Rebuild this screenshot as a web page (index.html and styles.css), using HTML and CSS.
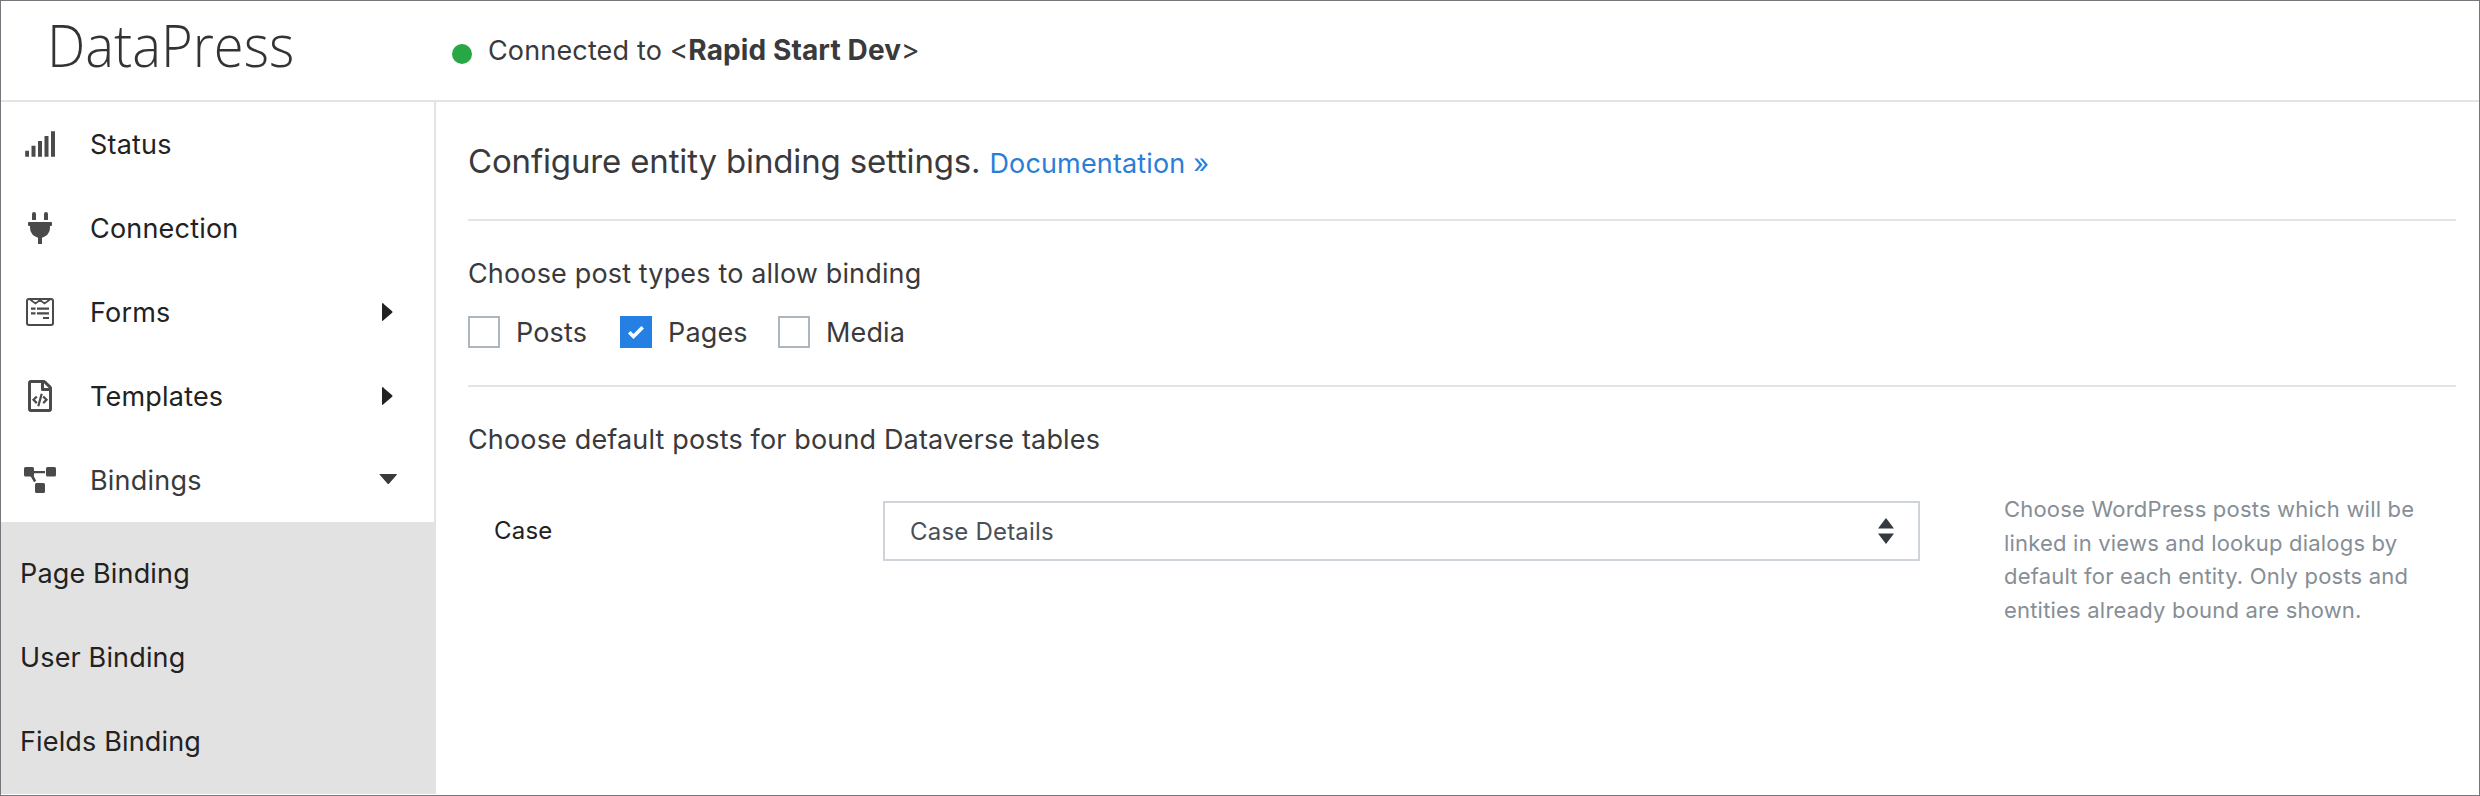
FILE: index.html
```html
<!DOCTYPE html>
<html lang="en">
<head>
<meta charset="utf-8">
<title>DataPress</title>
<link rel="stylesheet" href="styles.css">
</head>
<body>
<div class="app">
  <header class="header">
    <div class="logo">DataPress</div>
    <div class="connection"><span class="dot"></span><span>Connected to <span class="angle">&lt;</span><b>Rapid Start Dev</b><span class="angle">&gt;</span></span></div>
  </header>
  <div class="body">
    <nav class="sidebar">
      <a class="item">
        <svg class="icon" viewBox="0 0 32 32"><path d="M1.2 22.7h3.8v6H1.2zM7.5 17.7h4v11h-4zM14 13h4v15.7h-4zM20.5 8h4v20.7h-4zM27 3.2h4v25.5h-4z"/></svg>
        <span>Status</span>
      </a>
      <a class="item">
        <svg class="icon" viewBox="0 0 32 32"><path d="M8 8V2a2 2 0 0 1 4 0v6zM20 8V2a2 2 0 0 1 4 0v6zM5 10h22a1 1 0 0 1 1 1v2a1 1 0 0 1-1 1h-1v2a10 10 0 0 1-8 9.800V32h-4v-6.200A10 10 0 0 1 6 16v-2H5a1 1 0 0 1-1-1v-2a1 1 0 0 1 1-1z"/></svg>
        <span>Connection</span>
      </a>
      <a class="item">
        <svg class="icon" viewBox="0 0 32 32"><rect x="3" y="3" width="26" height="26" rx="2" fill="none" stroke="#4a4a4a" stroke-width="2"/><path d="M6 3.500l5.500 4 4.500-3.500 4.500 3.500 5.500-4" fill="none" stroke="#4a4a4a" stroke-width="1.700"/><path d="M7 11.500h4.500v2.200H7zM13 11.500h12v2.200H13zM7 16.200h4.500v2.200H7zM13 16.200h12v2.200H13zM19 21h6v2h-6z"/></svg>
        <span>Forms</span>
        <svg class="caret" viewBox="0 0 20 20"><path d="M4 1.500v17q0 .8.8.2L14.200 10.700q.6-.7 0-1.400L4.800 1.300Q4 .7 4 1.500z"/></svg>
      </a>
      <a class="item">
        <svg class="icon" viewBox="0 0 32 32"><path d="M7 0h12.800q1.200 0 2.100.9l5.200 5.200q.9.900.9 2.100V29a3 3 0 0 1-3 3H7a3 3 0 0 1-3-3V3a3 3 0 0 1 3-3zM7 3v26h18V11h-6.500a1.500 1.500 0 0 1-1.500-1.500V3zM20 3.200V8h4.800z" fill-rule="evenodd"/><path d="M12.800 16.500L9.500 19.800l3.300 3.300M19.200 16.500l3.300 3.300-3.300 3.300M17.700 13.800l-3.400 12.400" fill="none" stroke="#4a4a4a" stroke-width="2.200"/></svg>
        <span>Templates</span>
        <svg class="caret" viewBox="0 0 20 20"><path d="M4 1.500v17q0 .8.8.2L14.200 10.700q.6-.7 0-1.400L4.800 1.300Q4 .7 4 1.500z"/></svg>
      </a>
      <a class="item current">
        <svg class="icon" viewBox="0 0 32 32"><rect x="0" y="3" width="10" height="9.500" rx="1.500"/><rect x="22" y="3" width="10" height="9.500" rx="1.500"/><rect x="11" y="19" width="10" height="10" rx="1.500"/><path d="M9 7h12v2.300H9zM6.500 12l2.400-1.400 3.300 6.200-2.200 1.400z"/></svg>
        <span>Bindings</span>
        <svg class="caret down" viewBox="0 0 20 20"><path d="M2 4h16.500q1 0 .3.800l-7.800 8.900q-.7.600-1.400 0L1.700 4.800Q1 4 2 4z"/></svg>
      </a>
      <div class="submenu">
        <a class="subitem">Page Binding</a>
        <a class="subitem">User Binding</a>
        <a class="subitem">Fields Binding</a>
      </div>
    </nav>
    <main class="main">
      <div class="intro"><h1 class="title">Configure entity binding settings.</h1><a class="doc">Documentation »</a></div>
      <section class="types">
        <h2 class="heading">Choose post types to allow binding</h2>
        <div class="checks">
          <label class="check"><span class="box"></span>Posts</label>
          <label class="check pages"><span class="box on"><svg class="tick" viewBox="0 0 16 14"><path d="M1.200 7.200l4.300 4.300L14.700 2.300" fill="none" stroke="#fff" stroke-width="3.600"/></svg></span>Pages</label>
          <label class="check"><span class="box"></span>Media</label>
        </div>
      </section>
      <section class="defaults">
        <h2 class="heading">Choose default posts for bound Dataverse tables</h2>
        <div class="row">
          <div class="name">Case</div>
          <div class="select"><span>Case Details</span><svg class="sort" viewBox="0 0 16 26"><path d="M8 0l8 10.500H0zM0 15.500h16L8 26z"/></svg></div>
          <p class="help">Choose WordPress posts which will be<br>linked in views and lookup dialogs by<br>default for each entity. Only posts and<br>entities already bound are shown.</p>
        </div>
      </section>
    </main>
  </div>
</div>
</body>
</html>
```
FILE: styles.css
```css
* { box-sizing: border-box; }
body { margin: 0; background: #fff; font: 27px Inter, "Liberation Sans", sans-serif; letter-spacing: .15px; color: #3a3a3c; }
h1, h2, p { margin: 0; font-weight: 400; }
.app { width: 2480px; height: 796px; border: 1px solid #77767c; display: flex; flex-direction: column; overflow: hidden; }
.header { height: 101px; flex: none; border-bottom: 2px solid #e4e4e4; display: flex; }
.logo { width: 451px; padding-left: 46px; font: 300 59px/86px "Open Sans", sans-serif; letter-spacing: 0; color: #333; transform: scaleX(.92); transform-origin: 46px 0; white-space: nowrap; }
.connection { display: flex; align-items: center; gap: 16px; line-height: 101px; white-space: nowrap; }
.connection b { font-size: 28px; letter-spacing: .12px; }
.angle { font-size: 28px; letter-spacing: 0; }
.dot { width: 20px; height: 20px; border-radius: 50%; background: #28a745; margin-top: 6px; }
.body { flex: 1; display: flex; min-height: 0; }
.sidebar { width: 435px; flex: none; border-right: 2px solid #e4e4e4; height: 692px; }
.item { display: flex; align-items: center; height: 84px; padding: 0 34px 0 23px; color: #222; }
.current { color: #3a3a3c; }
.item span { flex: 1; padding-left: 34px; letter-spacing: .2px; }
.icon { width: 32px; height: 32px; fill: #4a4a4a; flex: none; }
.caret { width: 20px; height: 20px; fill: #222; margin-right: 2px; }
.down { fill: #3a3a3c; }
.submenu { background: #e2e2e2; padding: 10px 0 10px 19px; margin-right: -2px; }
.subitem { display: block; line-height: 84px; color: #222; }
.main { flex: 1; padding: 0 23px 0 32px; }
.intro { height: 119px; border-bottom: 2px solid #e4e4e4; display: flex; align-items: baseline; gap: 9px; padding-top: 29px; line-height: 60px; }
.title { font-size: 33px; letter-spacing: -.15px; }
.doc { color: #2a7ed8; }
.types { height: 166px; border-bottom: 2px solid #e4e4e4; padding-top: 33px; }
.heading { font-size: 27px; line-height: 40px; }
.checks { display: flex; margin-top: 22px; }
.check { display: flex; align-items: center; gap: 16px; height: 32px; width: 152px; }
.pages { width: 158px; }
.box { width: 32px; height: 32px; border: 2px solid #adb5bd; display: flex; align-items: center; justify-content: center; }
.on { background: #2680e3; border-color: #2680e3; }
.tick { width: 16px; height: 14px; }
.defaults { padding-top: 33px; }
.row { display: flex; margin-top: 32px; padding-left: 26px; font-size: 24px; letter-spacing: .2px; }
.name { width: 389px; line-height: 78px; color: #222; }
.select { width: 1037px; height: 60px; margin-top: 9px; border: 2px solid #ced4da; padding: 0 24px 0 25px; display: flex; align-items: center; justify-content: space-between; color: #495057; }
.sort { width: 16px; height: 26px; fill: #343a40; }
.help { margin-left: 84px; margin-top: 1px; font-size: 22px; line-height: 33.6px; letter-spacing: .2px; color: #868e96; white-space: nowrap; }
```
